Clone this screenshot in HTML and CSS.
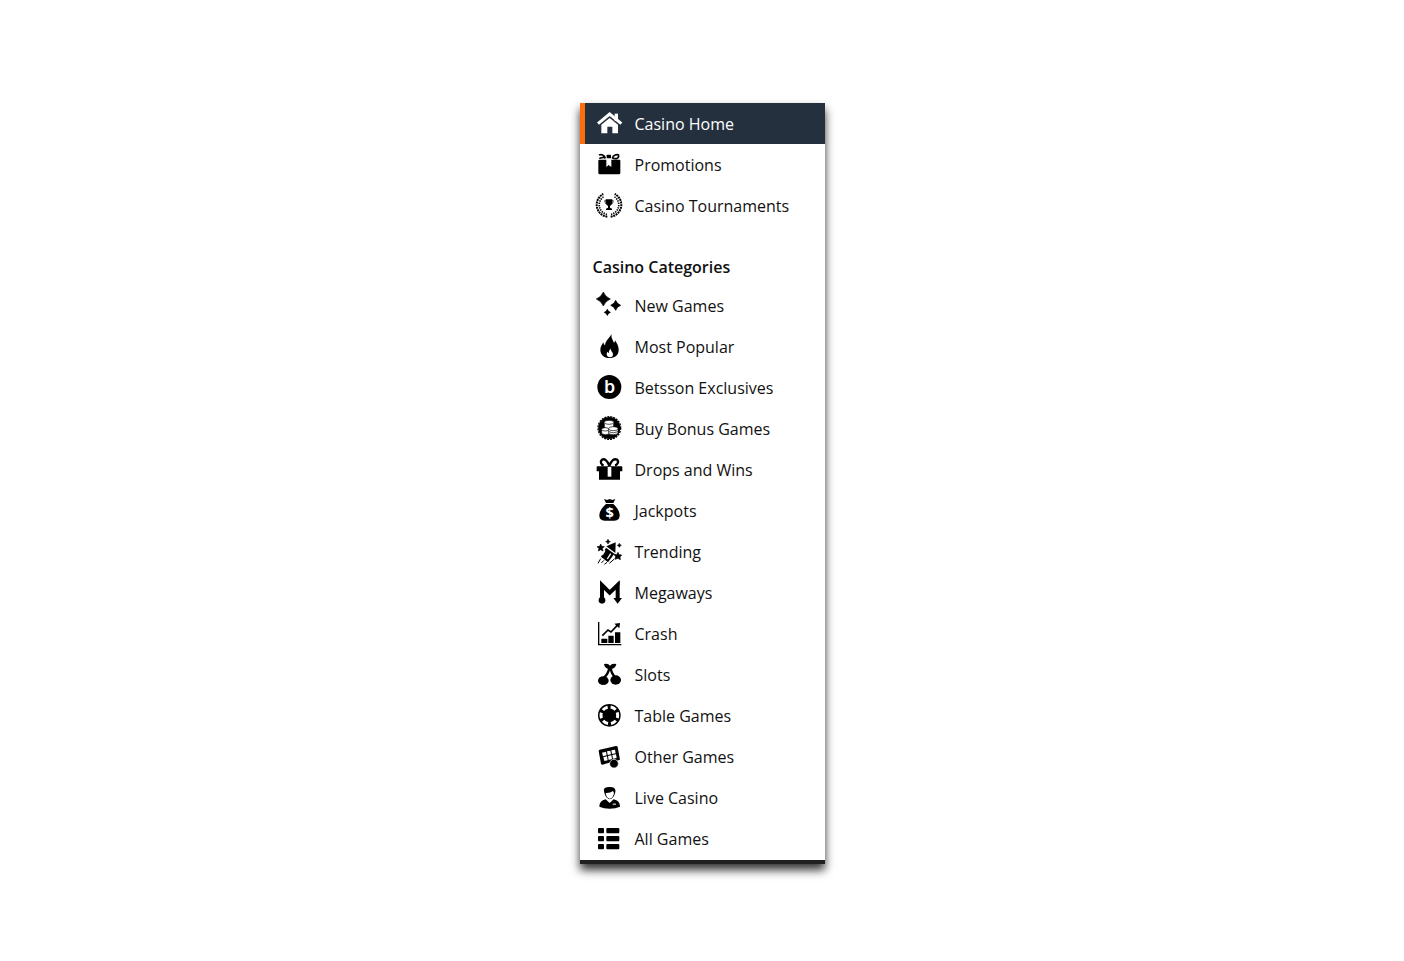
FILE: index.html
```html
<!DOCTYPE html>
<html lang="en">
<head>
  <title>Casino Menu</title>
  <meta charset="UTF-8">
  <meta name="viewport" content="width=device-width, initial-scale=1.0">
  <link rel="stylesheet" href="styles.css">
</head>
<body>
  <nav class="menu" aria-label="Casino">
    <ul>
      <li><a class="active" href="#home">
        <svg class="icon" viewBox="0 0 87 87">
          <path d="M59 14h10v22H59z"/>
          <path d="M9 44 44 15 79 44" fill="none" stroke="currentColor" stroke-width="9"/>
          <path d="M19 47 44 27 69 47V73H52V53H37V73H19z"/>
        </svg>
        Casino Home</a></li>
      <li><a href="#promotions">
        <svg class="icon" viewBox="0 0 87 87">
          <path d="M13 29H34V51L41 45 49 51V29H73Q76 29 76 32V69Q76 73 72 73H14Q10 73 10 69V32Q10 29 13 29z"/>
          <rect x="35" y="14" width="13" height="11" rx="2"/>
          <path d="M31 25C29 14 18 12 12 15M31 24C22 18 17 28 13 23M52 25C54 14 66 12 72 15M52 24C62 28 72 26 71 16" fill="none" stroke="currentColor" stroke-width="5"/>
        </svg>
        Promotions</a></li>
      <li><a href="#tournaments">
        <svg class="icon" viewBox="0 0 87 87">
          <g fill="none" stroke="currentColor">
            <path d="M37 77A36 36 0 0 1 25 9M47 77A36 36 0 0 0 59 9" stroke-width="6" stroke-dasharray="6 2"/>
            <path d="M36 70A29 29 0 0 1 28 16M48 70A29 29 0 0 0 56 16" stroke-width="5" stroke-dasharray="4 3"/>
            <path d="M34 29H29Q29 40 38 41M50 29H55Q55 40 46 41" stroke-width="2"/>
          </g>
          <path d="M32 25H52Q53 41 45 45V50L51 53V57H33V53L39 50V45Q31 41 32 25z"/>
        </svg>
        Casino Tournaments</a></li>
    </ul>

    <h2>Casino Categories</h2>
    <ul class="categories">
      <li><a href="#new">
        <svg class="icon" viewBox="0 0 87 87">
          <path d="M25 0Q31 15 46 21 31 27 25 42 19 27 4 21 19 15 25 0z" stroke="currentColor" stroke-width="2"/>
          <path d="M62 25Q66 36 77 40 66 44 62 55 58 44 47 40 58 36 62 25z" stroke="currentColor" stroke-width="2"/>
          <path d="M37 50Q40 58 48 61 40 64 37 72 34 64 26 61 34 58 37 50z"/>
        </svg>
        New Games</a></li>
      <li><a href="#popular">
        <svg class="icon" viewBox="0 0 87 87">
          <path d="M50 3C47 15 55 22 57 30Q60 27 60 22C67 32 71 41 71 50 71 67 59 75 43 75 27 75 16 65 16 50 16 40 22 34 25 28Q26 35 30 37C32 21 42 17 50 3z"/>
          <path d="M47 46C46 54 54 57 54 64Q54 73 45 73 36 73 35 64 35 59 37 56L41 61Q42 52 47 46z" fill="#fff"/>
        </svg>
        Most Popular</a></li>
      <li><a href="#exclusives">
        <svg class="icon" viewBox="0 0 87 87">
          <circle cx="43" cy="39" r="36"/>
          <text class="mark mark-b" x="44" y="57">b</text>
        </svg>
        Betsson Exclusives</a></li>
      <li><a href="#bonus">
        <svg class="icon" viewBox="0 0 87 87">
          <circle cx="43" cy="39" r="33"/>
          <circle cx="43" cy="39" r="34" fill="none" stroke="currentColor" stroke-width="4" stroke-dasharray="6 3"/>
          <g fill="#fff" stroke="#000" stroke-width="2">
            <path d="M20 43V56Q30 62 43 57V43z"/>
            <path d="M28 22V38Q40 46 56 38V22z"/>
            <ellipse cx="42" cy="22" rx="14" ry="6"/>
            <ellipse cx="31" cy="43" rx="11" ry="5"/>
            <path d="M41 42V56Q54 63 69 56V42z"/>
            <ellipse cx="55" cy="41" rx="14" ry="6"/>
            <path d="M41 50Q54 57 69 50" fill="none"/>
          </g>
        </svg>
        Buy Bonus Games</a></li>
      <li><a href="#drops">
        <svg class="icon" viewBox="0 0 87 87">
          <path d="M7 31H80Q82 31 82 33V46H75V71H12V46H5V33Q5 31 7 31z"/>
          <path d="M43 30C37 12 28 7 21 11 14 17 19 27 26 28M43 30C49 12 58 7 66 11 73 17 67 27 60 28" fill="none" stroke="currentColor" stroke-width="7"/>
          <path d="M38 33H49V62H38z" fill="#fff"/>
        </svg>
        Drops and Wins</a></li>
      <li><a href="#jackpots">
        <svg class="icon" viewBox="0 0 87 87">
          <path d="M27 6 36 9 44 6 52 9 61 6 55 18H33z"/>
          <path d="M33 21H55C64 29 74 42 74 55Q74 71 58 71H29Q13 71 13 55C13 42 24 29 33 21z"/>
          <text class="mark mark-dollar" x="44" y="62">$</text>
        </svg>
        Jackpots</a></li>
      <li><a href="#trending">
        <svg class="icon" viewBox="0 0 87 87">
          <path d="M62 13 34 25 61 45z"/>
          <path d="M33 29 58 47 39 73 18 56z"/>
          <path d="M30 37 22 51M37 63 47 47" stroke="#fff" stroke-width="4"/>
          <path d="M17 18 20 25 28 26 22 31 24 39 17 35 10 39 12 31 6 26 14 25z" stroke="currentColor" stroke-width="2"/>
          <path d="M69 43 72 50 80 51 75 57 76 65 69 61 60 64 62 56 57 49 65 50z" stroke="currentColor" stroke-width="2"/>
          <path d="M39 4 41 9 46 11 41 13 39 18 37 13 32 11 37 9zM73 16 75 20 79 22 75 24 73 28 71 24 67 22 71 20z" stroke="currentColor" stroke-width="2"/>
          <path d="M17 62 9 76M27 67 19 75M36 73 28 79M58 63 43 76" stroke="currentColor" stroke-width="3"/>
        </svg>
        Trending</a></li>
      <li><a href="#megaways">
        <svg class="icon" viewBox="0 0 87 87">
          <path d="M21 65V18L44 41 68 18V61" fill="none" stroke="currentColor" stroke-width="12"/>
          <path d="M15 6 27 18H15zM74 6 62 18H74z"/>
          <circle cx="21" cy="64" r="10"/>
          <path d="M55 57H81L68 74z"/>
        </svg>
        Megaways</a></li>
      <li><a href="#crash">
        <svg class="icon" viewBox="0 0 87 87">
          <path d="M11 6V74H79" fill="none" stroke="currentColor" stroke-width="4"/>
          <path d="M19 56H37V69H19zM40 47H56V69H40zM60 37H76V69H60z"/>
          <path d="M22 47 39 30 48 36 69 14" fill="none" stroke="currentColor" stroke-width="5"/>
          <path d="M58 11 75 9 73 25z"/>
        </svg>
        Crash</a></li>
      <li><a href="#slots">
        <svg class="icon" viewBox="0 0 87 87">
          <path d="M27 9Q40 6 45 14 51 6 64 9 62 24 45 25 29 24 27 9z"/>
          <path d="M43 21Q40 38 27 50M47 21Q48 35 59 48" fill="none" stroke="currentColor" stroke-width="7"/>
          <ellipse cx="25" cy="59" rx="16" ry="13"/>
          <ellipse cx="62" cy="57" rx="16" ry="14"/>
        </svg>
        Slots</a></li>
      <li><a href="#table">
        <svg class="icon" viewBox="0 0 87 87">
          <circle cx="43" cy="40" r="34"/>
          <circle cx="43" cy="40" r="25" fill="none" stroke="#fff" stroke-width="9" stroke-dasharray="17 9" stroke-dashoffset="9"/>
        </svg>
        Table Games</a></li>
      <li><a href="#other">
        <svg class="icon" viewBox="0 0 87 87">
          <path d="M14 20 63 9Q67 8 68 12L75 50 22 65Q19 65 18 62L11 24Q11 21 14 20z"/>
          <path d="M21 29 33 26 35 37 24 40zM36 25 46 23 48 34 38 36zM49 22 60 20 62 31 51 33zM25 43 36 40 38 52 28 54zM39 39 49 37 51 48 41 51zM52 36 63 34 65 45 54 47z" fill="#fff"/>
          <circle cx="57" cy="62" r="13" stroke="#fff" stroke-width="2"/>
        </svg>
        Other Games</a></li>
      <li><a href="#live">
        <svg class="icon" viewBox="0 0 87 87">
          <path d="M28 26C22 9 36 10 42 9 60 7 64 17 60 28 54 52 34 51 28 26z"/>
          <path d="M32 27Q45 28 54 21L57 27Q54 44 44 44 34 42 32 27z" fill="#fff"/>
          <path d="M32 46 44 57 56 46Q75 50 75 68 62 74 44 74 26 74 13 68 13 50 32 46z"/>
          <path d="M36 43 44 52 52 43 52 47 44 55 36 47z" fill="#fff"/>
          <path d="M53 59H63V62H53z" fill="#fff"/>
        </svg>
        Live Casino</a></li>
      <li><a href="#all">
        <svg class="icon" viewBox="0 0 87 87">
          <rect x="9" y="9" width="18" height="16" rx="3"/>
          <rect x="34" y="9" width="39" height="16" rx="3"/>
          <rect x="9" y="33" width="18" height="16" rx="3"/>
          <rect x="34" y="33" width="39" height="16" rx="3"/>
          <rect x="9" y="57" width="18" height="16" rx="3"/>
          <rect x="34" y="57" width="39" height="16" rx="3"/>
        </svg>
        All Games</a></li>
    </ul>
  </nav>
</body>
</html>
```

FILE: styles.css
```css
body { margin: 0; padding: 103px 20px 97px; background: #fff; font-family: "Open Sans", Arial, sans-serif; }
.menu { max-width: 245px; margin: 0 auto; background: #fff; border-bottom: 4px solid #202020; box-shadow: 0 6px 9px rgba(0, 0, 0, 0.8); }
.menu ul { list-style: none; margin: 0; padding: 0; }
.menu .categories { padding-bottom: 1px; }
.menu a { display: flex; align-items: center; gap: 11px; height: 41px; padding-left: 10px; border-left: 5px solid transparent; color: #111; font-size: 16px; text-decoration: none; box-sizing: border-box; }
.menu a:hover { background: #f2f2f2; }
.menu a.active { background: #25303e; border-left-color: #ff6c0a; color: #fff; font-weight: 500; }
.menu h2 { margin: 0; padding: 29px 13px 6px; color: #111; font-size: 16px; font-weight: 600; line-height: 24px; }
.icon { flex: none; width: 29px; height: 29px; color: #000; fill: currentColor; }
.categories .icon { margin-top: 2px; }
.active .icon { color: #fff; }
.mark { fill: #fff; font-weight: 700; text-anchor: middle; }
.mark-b { font-family: Inter, Arial, sans-serif; font-size: 52px; font-weight: 600; }
.mark-dollar { font-size: 44px; }
```
